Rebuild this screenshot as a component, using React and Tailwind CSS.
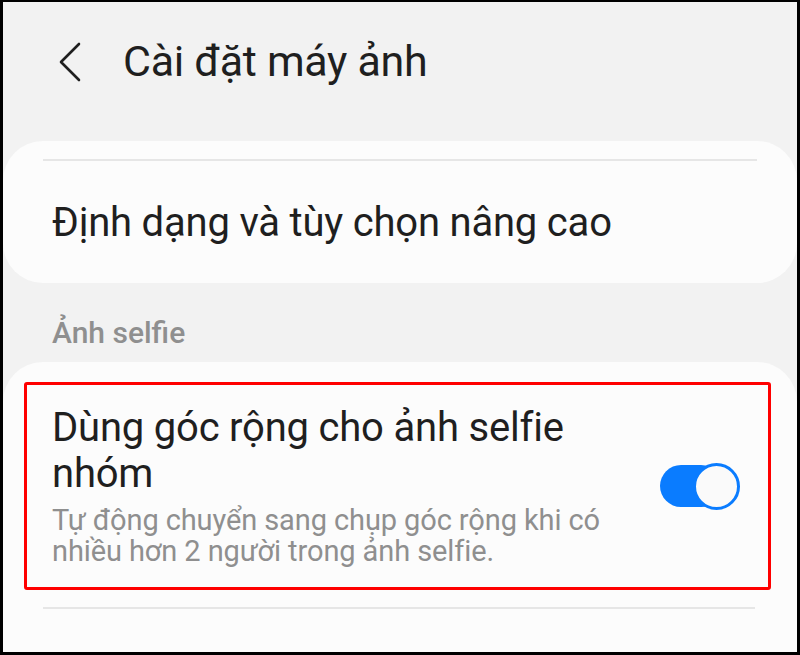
import React from "react";

export default function App() {
  return (
    <div className="w-[800px] h-[655px] bg-black pt-[2px] pl-[3px] pr-[3px] pb-[3px]">
      <div
        className="w-full h-full bg-[#f2f2f2] overflow-hidden"
        style={{ fontFamily: "Roboto, 'Noto Sans', sans-serif" }}
      >
        {/* header */}
        <div className="flex items-center h-[118px] pl-[52px]">
          <svg width="30" height="42" viewBox="0 0 30 42" fill="none" className="mt-[2px]">
            <path d="M24 3 L6 21 L24 39" stroke="#1f1f1f" strokeWidth="2.6" strokeLinecap="round" strokeLinejoin="round" />
          </svg>
          <h1 className="ml-[38px] text-[43px] leading-none text-[#1f1f1f] tracking-[-0.3px]">
            Cài đặt máy ảnh
          </h1>
        </div>

        {/* card 1 */}
        <div className="mt-[21px] bg-[#fcfcfc] rounded-[40px] h-[142px] px-[40px] pt-[18px]">
          <div className="h-[2px] bg-[#e6e6e6]" />
          <div className="pl-[9px] pt-[42px] text-[40px] leading-none text-[#1f1f1f] tracking-[-0.2px] whitespace-nowrap">
            Định dạng và tùy chọn nâng cao
          </div>
        </div>

        {/* section label */}
        <div className="pl-[49px] pt-[35px] h-[79px] text-[30px] leading-none text-[#8f8f8f] font-medium">
          Ảnh selfie
        </div>

        {/* card 2 */}
        <div className="bg-[#fcfcfc] rounded-t-[40px] h-[300px] pt-[20px] pl-[21px] pr-[26px]">
          <div className="border-[3px] border-[#ff0000] rounded-[3px] h-[208px] flex items-center pl-[25px] pr-[28px]">
            <div className="flex-1 self-stretch pt-[20px]">
              <div className="text-[40px] leading-[46px] text-[#1f1f1f] tracking-[-0.2px] whitespace-nowrap">
                Dùng góc rộng cho ảnh selfie
                <br />
                nhóm
              </div>
              <div className="mt-[8px] text-[29px] leading-[31px] text-[#8f8f8f] tracking-[-0.1px] whitespace-nowrap">
                Tự động chuyển sang chụp góc rộng khi có
                <br />
                nhiều hơn 2 người trong ảnh selfie.
              </div>
            </div>
            <div className="relative w-[80px] h-[47px] flex items-center">
              <div className="w-[62px] h-[42px] rounded-full bg-[#0a7cff]" />
              <div className="absolute right-0 top-0 w-[47px] h-[47px] rounded-full bg-[#fafafa] border-[3px] border-[#0a7cff]" />
            </div>
          </div>
          <div className="mt-[17px] ml-[19px] mr-[16px] h-[2px] bg-[#e6e6e6]" />
        </div>
      </div>
    </div>
  );
}
